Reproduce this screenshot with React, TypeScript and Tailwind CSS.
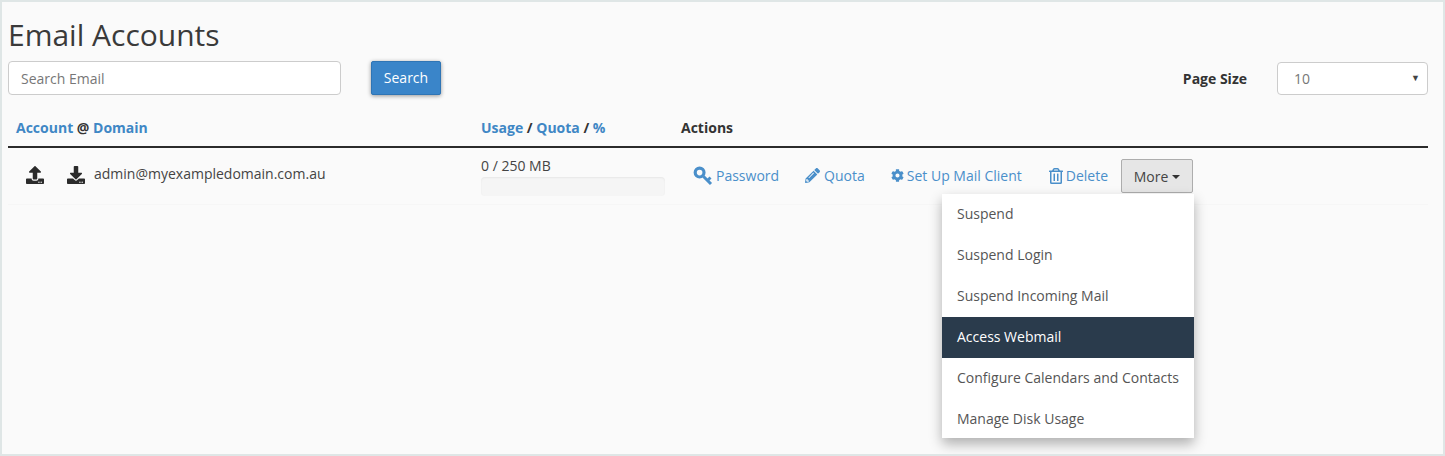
import { FaCog, FaDownload, FaPencilAlt, FaRegTrashAlt, FaUpload } from "react-icons/fa";

const menuItems = [
  "Suspend",
  "Suspend Login",
  "Suspend Incoming Mail",
  "Access Webmail",
  "Configure Calendars and Contacts",
  "Manage Disk Usage",
];

// FA4 style key, head top left with an open hole
function KeyIcon() {
  return (
    <svg viewBox="0 0 20 20" className="size-[20px]" fill="none" stroke="currentColor">
      <circle cx="6.6" cy="6.6" r="4.4" strokeWidth="3.2" />
      <path d="M10.5 10.5 L18 18" strokeWidth="3" />
      <path d="M14.5 14.5 L17.5 11.5" strokeWidth="2.8" />
    </svg>
  );
}

export default function App() {
  return (
    <div className="h-[456px] w-[1445px] overflow-hidden border-2 border-[#dfe6e6] bg-[#fafafa] font-['Open_Sans',sans-serif] text-[14px] text-[#444]">
      <div className="pl-[6px] pr-[15px]">
        {/* Title */}
        <h1 className="mt-[15px] h-[44px] text-[30px] leading-[35px] text-[#3a3a3a]">Email Accounts</h1>

        {/* Search and page size */}
        <div className="flex items-start">
          <input
            readOnly
            placeholder="Search Email"
            className="h-[34px] w-[333px] rounded-[4px] border border-[#ccc] bg-white px-3 text-[14px] placeholder:text-[#777]"
          />
          <button className="ml-[30px] h-[34px] w-[70px] rounded-[2px] border border-[#2f75b5] bg-[#3a85c9] pb-[2px] text-[14px] text-white shadow-[0_1px_4px_rgba(0,0,0,0.4)]">
            Search
          </button>
          <span className="ml-auto mt-[7px] text-[14px] font-bold text-[#333]">Page Size</span>
          <div className="relative ml-[30px] mt-px flex h-[33px] w-[151px] items-center rounded-[4px] border border-[#ccc] bg-white pl-4 text-[#777]">
            10
            <span className="absolute right-[7px] top-[8px] text-[9px] text-[#444]">▼</span>
          </div>
        </div>

        {/* Header row */}
        <div className="mt-[15px] grid h-[38px] grid-cols-[465px_200px_1fr] border-b-2 border-[#2b2b2b] font-bold leading-[35px] text-[#333]">
          <div className="pl-2">
            <a className="text-[#3f87c5]">Account</a> @ <a className="text-[#3f87c5]">Domain</a>
          </div>
          <div className="pl-2">
            <a className="text-[#3f87c5]">Usage</a> / <a className="text-[#3f87c5]">Quota</a> /{" "}
            <a className="text-[#3f87c5]">%</a>
          </div>
          <div className="pl-2">Actions</div>
        </div>

        {/* Account row */}
        <div className="grid h-[57px] grid-cols-[465px_200px_1fr] border-b border-[#f6f6f6]">
          <div className="flex items-start pl-[18px] pt-[16px]">
            <FaUpload className="mt-[2px] size-[18px] text-[#2b2b2b]" />
            <FaDownload className="ml-[23px] mt-[2px] size-[18px] text-[#2b2b2b]" />
            <span className="ml-[9px] leading-[19px]">admin@myexampledomain.com.au</span>
          </div>
          <div className="px-2 pt-[8px]">
            <div className="h-[19px] leading-[19px]">0 / 250 MB</div>
            <div className="mt-[2px] h-[19px] w-[184px] rounded-[4px] bg-[#f5f5f5] shadow-[inset_0_1px_2px_rgba(0,0,0,0.06)]" />
          </div>
          <div className="relative flex items-start pl-[20px] pt-[11px] text-[#4a8fca]">
            <a className="flex h-[33px] items-center">
              <KeyIcon />
              <span className="ml-[3px]">Password</span>
            </a>
            <a className="ml-[26px] flex h-[33px] items-center">
              <FaPencilAlt className="size-[15px]" />
              <span className="ml-[4px]">Quota</span>
            </a>
            <a className="ml-[26px] flex h-[33px] items-center">
              <FaCog className="size-[13px]" />
              <span className="ml-[3px]">Set Up Mail Client</span>
            </a>
            <a className="ml-[26px] flex h-[33px] items-center">
              <FaRegTrashAlt className="size-[16px]" />
              <span className="ml-[2px]">Delete</span>
            </a>
            <button className="ml-[13px] flex h-[34px] w-[72px] items-center justify-center rounded-[2px] border border-[#adadad] bg-[#e6e6e6] text-[#444]">
              More
              <span className="ml-[4px] mt-[2px] border-x-[4px] border-t-[4px] border-x-transparent border-t-[#333]" />
            </button>

            {/* Dropdown menu */}
            <ul className="absolute left-[269px] top-[46px] h-[244px] w-[252px] overflow-hidden bg-white text-[#555] shadow-[0_6px_12px_rgba(0,0,0,0.3)]">
              {menuItems.map((item) => (
                <li
                  key={item}
                  className={
                    item === "Access Webmail"
                      ? "h-[41px] bg-[#2a3b4c] pl-[15px] font-medium leading-[40px] text-white"
                      : "h-[41px] pl-[15px] leading-[40px]"
                  }
                >
                  {item}
                </li>
              ))}
            </ul>
          </div>
        </div>
      </div>
    </div>
  );
}
